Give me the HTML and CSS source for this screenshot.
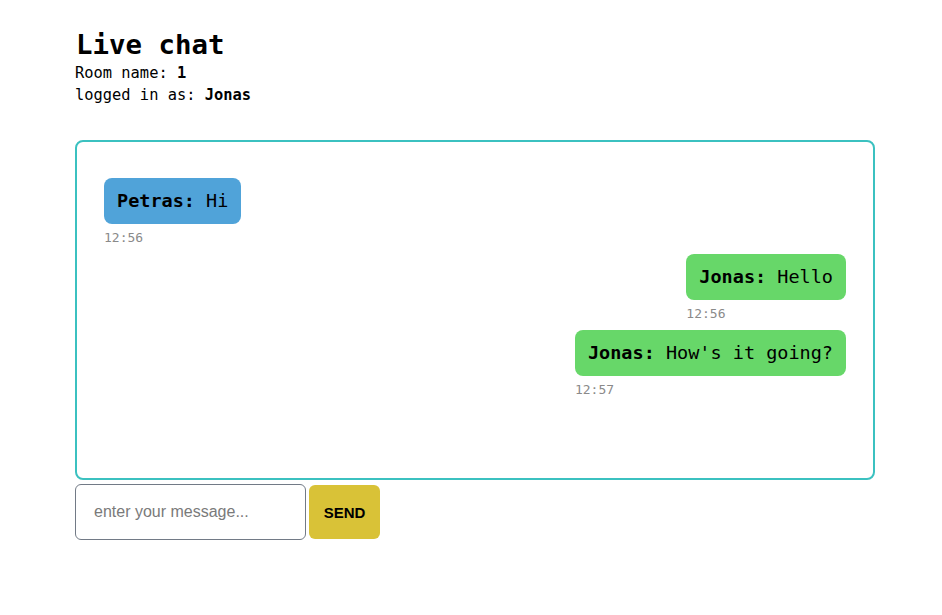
FILE: index.html
```html
<!DOCTYPE html>
<html>
<head>
<meta charset="utf-8">
<link rel="stylesheet" href="styles.css">
</head>
<body>
<div class="page">
  <header class="head">
    <h1 class="title">Live chat</h1>
    <div class="meta">Room name: <b>1</b></div>
    <div class="meta">logged in as: <b>Jonas</b></div>
  </header>
  <section class="chat">
    <div class="msg">
      <div class="bubble blue"><b>Petras:</b> Hi</div>
      <div class="time">12:56</div>
    </div>
    <div class="msg mine">
      <div class="bubble green"><b>Jonas:</b> Hello</div>
      <div class="time">12:56</div>
    </div>
    <div class="msg mine">
      <div class="bubble green"><b>Jonas:</b> How's it going?</div>
      <div class="time">12:57</div>
    </div>
  </section>
  <form class="composer">
    <input class="input" type="text" placeholder="enter your message...">
    <button class="send" type="button">SEND</button>
  </form>
</div>
</body>
</html>
```
FILE: styles.css
```css
* { box-sizing: border-box; }
body {
  margin: 0;
  background: #fff;
  font-family: "DejaVu Sans Mono", "Liberation Mono", monospace;
  color: #000;
}
.page {
  width: 800px;
  margin-left: 75px;
  padding-top: 29px;
}
.title {
  margin: 0 0 1px 1px;
  font-size: 27.4px;
  line-height: 32px;
  font-weight: bold;
}
.meta {
  font-size: 15.4px;
  line-height: 22px;
}
.chat {
  margin-top: 34px;
  height: 340px;
  border: 2px solid #3bc1c0;
  border-radius: 8px;
  padding: 36px 27px;
  display: flex;
  flex-direction: column;
  align-items: flex-start;
}
.msg {
  display: flex;
  flex-direction: column;
  align-items: flex-start;
  margin-bottom: 8px;
}
.msg.mine { align-self: flex-end; }
.bubble {
  font-size: 18.5px;
  line-height: 22px;
  padding: 12px 13px;
  border-radius: 8px;
  white-space: pre;
}
.blue { background: #50a3d9; }
.green { background: #67d769; }
.time {
  margin-top: 6px;
  font-size: 13px;
  line-height: 16px;
  color: #8a8a8a;
}
.composer {
  margin-top: 4px;
  display: flex;
  align-items: flex-start;
  gap: 3px;
}
.input {
  width: 231px;
  height: 56px;
  border: 1px solid #727a86;
  border-radius: 6px;
  padding: 0 18px;
  font-family: "Liberation Sans", Arial, sans-serif;
  font-size: 16px;
  outline: none;
}
.input::placeholder { color: #7a7a7a; }
.send {
  margin-top: 1px;
  width: 71px;
  height: 54px;
  border: none;
  border-radius: 6px;
  background: #d9c237;
  font-family: "Liberation Sans", Arial, sans-serif;
  font-weight: bold;
  font-size: 15px;
  color: #000;
  padding: 0;
}
```
